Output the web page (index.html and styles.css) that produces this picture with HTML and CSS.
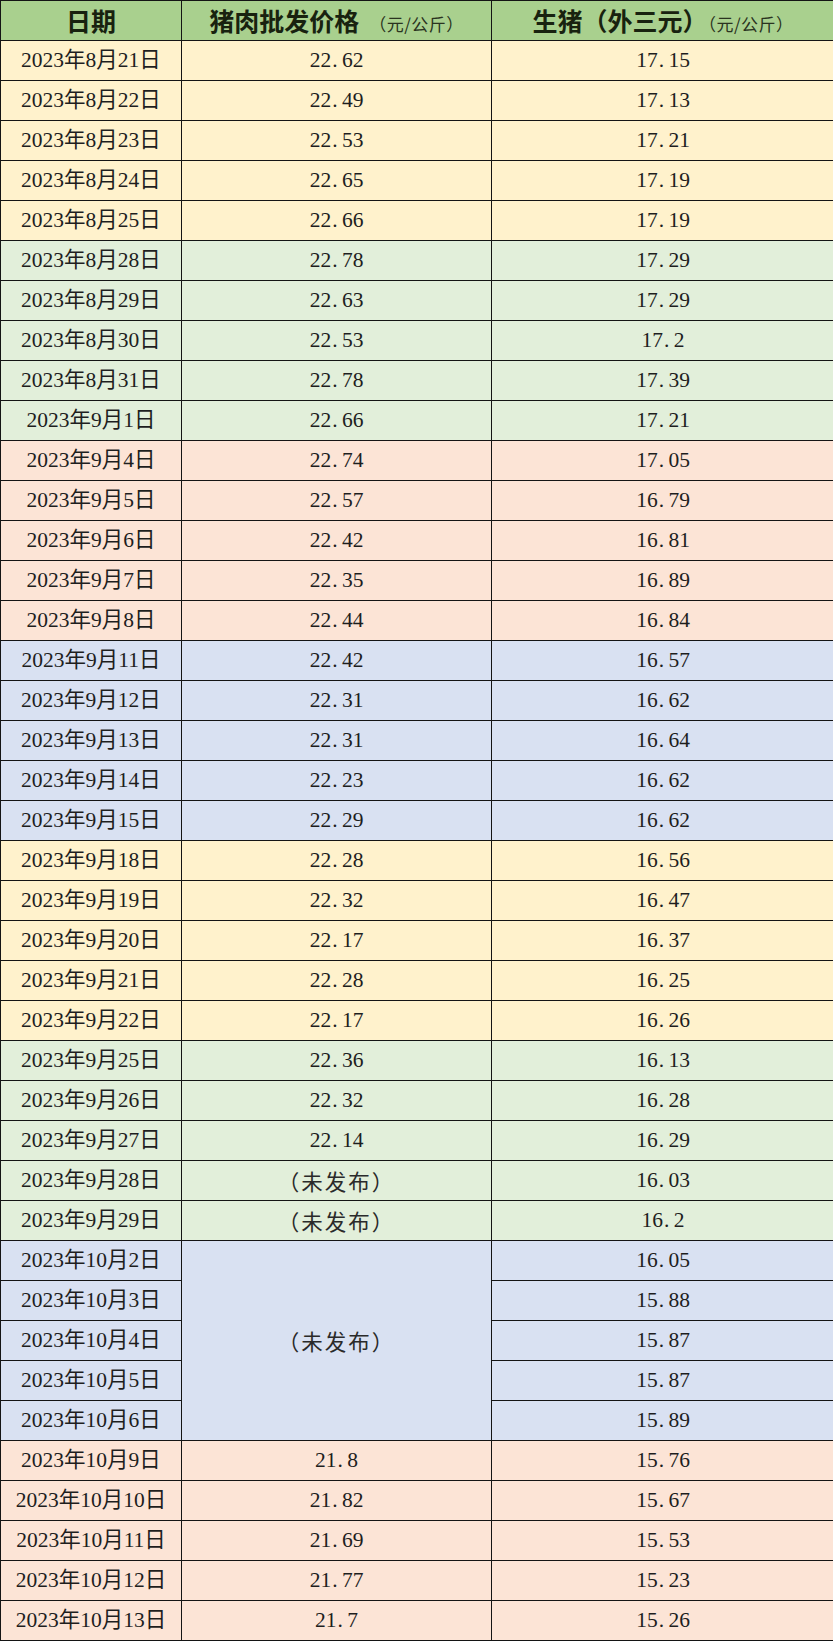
FILE: index.html
```html
<!DOCTYPE html>
<html lang="zh-CN">
<head>
<meta charset="utf-8">
<title>猪肉批发价格</title>
<link rel="stylesheet" href="styles.css">
</head>
<body>
<table class="price-table">
  <colgroup>
    <col class="c-date">
    <col class="c-pork">
    <col class="c-hog">
  </colgroup>
  <thead>
    <tr class="head">
      <th>日期</th>
      <th>猪肉批发价格<span class="unit unit-gap">（元/公斤）</span></th>
      <th>生猪（外三元）<span class="unit">（元/公斤）</span></th>
    </tr>
  </thead>
  <tbody>
    <tr class="yellow"><td>2023年8月21日</td><td>22<span class="dot">.</span>62</td><td>17<span class="dot">.</span>15</td></tr>
    <tr class="yellow"><td>2023年8月22日</td><td>22<span class="dot">.</span>49</td><td>17<span class="dot">.</span>13</td></tr>
    <tr class="yellow"><td>2023年8月23日</td><td>22<span class="dot">.</span>53</td><td>17<span class="dot">.</span>21</td></tr>
    <tr class="yellow"><td>2023年8月24日</td><td>22<span class="dot">.</span>65</td><td>17<span class="dot">.</span>19</td></tr>
    <tr class="yellow"><td>2023年8月25日</td><td>22<span class="dot">.</span>66</td><td>17<span class="dot">.</span>19</td></tr>
    <tr class="green"><td>2023年8月28日</td><td>22<span class="dot">.</span>78</td><td>17<span class="dot">.</span>29</td></tr>
    <tr class="green"><td>2023年8月29日</td><td>22<span class="dot">.</span>63</td><td>17<span class="dot">.</span>29</td></tr>
    <tr class="green"><td>2023年8月30日</td><td>22<span class="dot">.</span>53</td><td>17<span class="dot">.</span>2</td></tr>
    <tr class="green"><td>2023年8月31日</td><td>22<span class="dot">.</span>78</td><td>17<span class="dot">.</span>39</td></tr>
    <tr class="green"><td>2023年9月1日</td><td>22<span class="dot">.</span>66</td><td>17<span class="dot">.</span>21</td></tr>
    <tr class="pink"><td>2023年9月4日</td><td>22<span class="dot">.</span>74</td><td>17<span class="dot">.</span>05</td></tr>
    <tr class="pink"><td>2023年9月5日</td><td>22<span class="dot">.</span>57</td><td>16<span class="dot">.</span>79</td></tr>
    <tr class="pink"><td>2023年9月6日</td><td>22<span class="dot">.</span>42</td><td>16<span class="dot">.</span>81</td></tr>
    <tr class="pink"><td>2023年9月7日</td><td>22<span class="dot">.</span>35</td><td>16<span class="dot">.</span>89</td></tr>
    <tr class="pink"><td>2023年9月8日</td><td>22<span class="dot">.</span>44</td><td>16<span class="dot">.</span>84</td></tr>
    <tr class="blue"><td>2023年9月11日</td><td>22<span class="dot">.</span>42</td><td>16<span class="dot">.</span>57</td></tr>
    <tr class="blue"><td>2023年9月12日</td><td>22<span class="dot">.</span>31</td><td>16<span class="dot">.</span>62</td></tr>
    <tr class="blue"><td>2023年9月13日</td><td>22<span class="dot">.</span>31</td><td>16<span class="dot">.</span>64</td></tr>
    <tr class="blue"><td>2023年9月14日</td><td>22<span class="dot">.</span>23</td><td>16<span class="dot">.</span>62</td></tr>
    <tr class="blue"><td>2023年9月15日</td><td>22<span class="dot">.</span>29</td><td>16<span class="dot">.</span>62</td></tr>
    <tr class="yellow"><td>2023年9月18日</td><td>22<span class="dot">.</span>28</td><td>16<span class="dot">.</span>56</td></tr>
    <tr class="yellow"><td>2023年9月19日</td><td>22<span class="dot">.</span>32</td><td>16<span class="dot">.</span>47</td></tr>
    <tr class="yellow"><td>2023年9月20日</td><td>22<span class="dot">.</span>17</td><td>16<span class="dot">.</span>37</td></tr>
    <tr class="yellow"><td>2023年9月21日</td><td>22<span class="dot">.</span>28</td><td>16<span class="dot">.</span>25</td></tr>
    <tr class="yellow"><td>2023年9月22日</td><td>22<span class="dot">.</span>17</td><td>16<span class="dot">.</span>26</td></tr>
    <tr class="green"><td>2023年9月25日</td><td>22<span class="dot">.</span>36</td><td>16<span class="dot">.</span>13</td></tr>
    <tr class="green"><td>2023年9月26日</td><td>22<span class="dot">.</span>32</td><td>16<span class="dot">.</span>28</td></tr>
    <tr class="green"><td>2023年9月27日</td><td>22<span class="dot">.</span>14</td><td>16<span class="dot">.</span>29</td></tr>
    <tr class="green"><td>2023年9月28日</td><td class="na">（未发布）</td><td>16<span class="dot">.</span>03</td></tr>
    <tr class="green"><td>2023年9月29日</td><td class="na">（未发布）</td><td>16<span class="dot">.</span>2</td></tr>
    <tr class="blue"><td>2023年10月2日</td><td class="na" rowspan="5">（未发布）</td><td>16<span class="dot">.</span>05</td></tr>
    <tr class="blue"><td>2023年10月3日</td><td>15<span class="dot">.</span>88</td></tr>
    <tr class="blue"><td>2023年10月4日</td><td>15<span class="dot">.</span>87</td></tr>
    <tr class="blue"><td>2023年10月5日</td><td>15<span class="dot">.</span>87</td></tr>
    <tr class="blue"><td>2023年10月6日</td><td>15<span class="dot">.</span>89</td></tr>
    <tr class="pink"><td>2023年10月9日</td><td>21<span class="dot">.</span>8</td><td>15<span class="dot">.</span>76</td></tr>
    <tr class="pink"><td>2023年10月10日</td><td>21<span class="dot">.</span>82</td><td>15<span class="dot">.</span>67</td></tr>
    <tr class="pink"><td>2023年10月11日</td><td>21<span class="dot">.</span>69</td><td>15<span class="dot">.</span>53</td></tr>
    <tr class="pink"><td>2023年10月12日</td><td>21<span class="dot">.</span>77</td><td>15<span class="dot">.</span>23</td></tr>
    <tr class="pink"><td>2023年10月13日</td><td>21<span class="dot">.</span>7</td><td>15<span class="dot">.</span>26</td></tr>
  </tbody>
</table>
</body>
</html>
```
FILE: styles.css
```css
html, body {
  margin: 0;
  padding: 0;
  background: #ffffff;
}

.price-table {
  border-collapse: collapse;
  table-layout: fixed;
  width: 834px;
  font-family: "Liberation Serif", "Noto Sans CJK SC", serif;
  font-size: 21.5px;
  color: #1e1e1e;
}

.c-date { width: 181px; }
.c-pork { width: 310px; }
.c-hog { width: 343px; }

.price-table th,
.price-table td {
  border: 1px solid #141414;
  padding: 0;
  height: 39px;
  text-align: center;
  vertical-align: middle;
  line-height: 1;
  white-space: nowrap;
}

.head th {
  background: #a9d08e;
  font-family: "Noto Sans CJK SC", sans-serif;
  font-weight: 700;
  font-size: 25px;
  color: #18220f;
}

.unit {
  font-family: "Noto Sans CJK SC", sans-serif;
  font-weight: 400;
  font-size: 17px;
  color: #2a3320;
  letter-spacing: 0.5px;
}

.unit-gap {
  margin-left: 10px;
}

.dot {
  display: inline-block;
  width: 0.5em;
  text-align: left;
  padding-left: 0.05em;
  box-sizing: border-box;
}

.na {
  font-family: "Noto Sans CJK SC", sans-serif;
  font-size: 21.5px;
  letter-spacing: 2px;
  color: #2a2a2a;
}

.yellow td { background: #fff2cc; }
.green td { background: #e2efda; }
.pink td { background: #fce4d6; }
.blue td { background: #d9e1f2; }
```
